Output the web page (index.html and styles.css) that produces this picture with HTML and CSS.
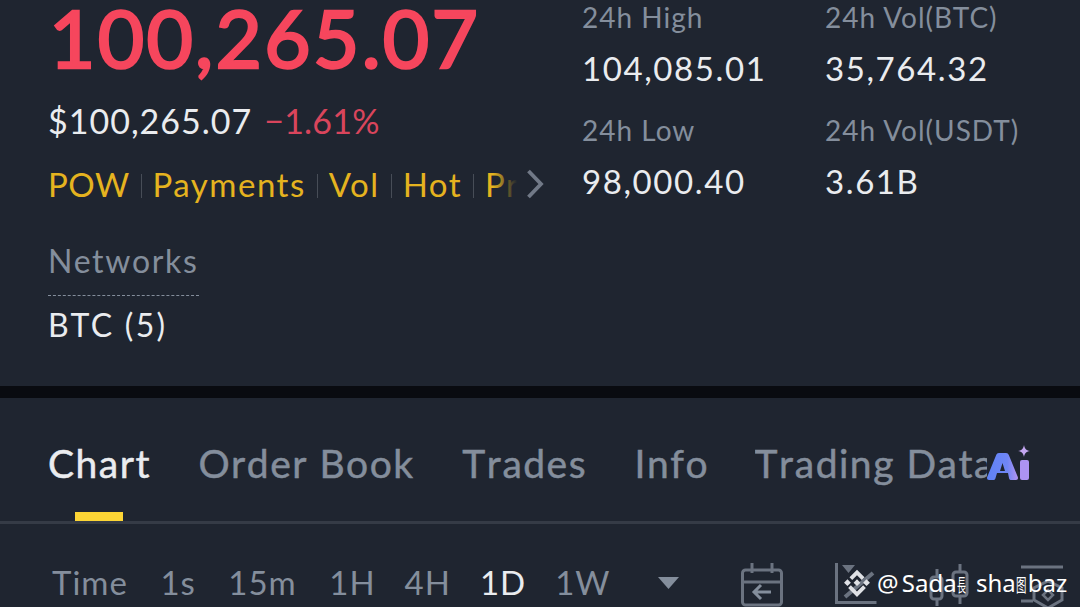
FILE: index.html
```html
<!DOCTYPE html>
<html lang="en">
<head>
  <meta charset="UTF-8">
  <title>BTC/USDT</title>
  <link rel="stylesheet" href="styles.css">
</head>
<body>
  <section class="summary">
    <div class="price-col">
      <div class="last-price">100,265.07</div>
      <div class="sub-price"><span class="usd">$100,265.07</span><span class="change">−1.61%</span></div>
      <div class="tags-row">
        <div class="tags">
          <span class="tag-short">POW</span><i></i><span>Payments</span><i></i><span>Vol</span><i></i><span>Hot</span><i></i><span>Pr</span>
          <div class="tags-fade"></div>
        </div>
        <svg class="tags-arrow" width="18" height="30" viewBox="0 0 18 30"><path d="M2.500 2l12.500 13L2.500 28" fill="none" stroke="#717987" stroke-width="3.800"/></svg>
      </div>
      <div class="networks">
        <span class="networks-label">Networks</span>
        <span class="networks-value">BTC (5)</span>
      </div>
    </div>
    <div class="stats">
      <div class="stat"><span class="stat-label">24h High</span><span class="stat-value">104,085.01</span></div>
      <div class="stat"><span class="stat-label">24h Vol(BTC)</span><span class="stat-value">35,764.32</span></div>
      <div class="stat"><span class="stat-label">24h Low</span><span class="stat-value">98,000.40</span></div>
      <div class="stat"><span class="stat-label">24h Vol(USDT)</span><span class="stat-value">3.61B</span></div>
    </div>
  </section>

  <div class="divider"></div>

  <nav class="tabs">
    <a class="tab active">Chart</a>
    <a class="tab">Order Book</a>
    <a class="tab">Trades</a>
    <a class="tab">Info</a>
    <a class="tab tab-clip">Trading Data</a>
    <svg class="ai-badge" width="46" height="40" viewBox="0 0 46 40">
      <defs>
        <linearGradient id="aiFill" x1="0" x2="1" y1="0" y2="0">
          <stop offset="0" stop-color="#5f82f5"/>
          <stop offset="0.65" stop-color="#6f86f6"/>
          <stop offset="1" stop-color="#b394f2"/>
        </linearGradient>
      </defs>
      <path fill="url(#aiFill)" fill-rule="evenodd" d="M13 11h7c1.500 0 2.300.7 2.800 2l9 22c.6 1.600-.2 3-1.800 3h-4.500c-1.200 0-2-.6-2.400-1.600L22 31H11l-1.600 5.400C9 37.400 8.200 38 7 38H3c-1.600 0-2.400-1.400-1.800-3l9-22c.5-1.300 1.300-2 2.800-2zm3.500 10L14 29h5z"/>
      <rect x="34" y="18" width="9" height="20" rx="2" fill="#ac93f3"/>
      <path d="M38 3c.7 3.600 1.800 5.300 6 6-4.200.7-5.300 2.400-6 6-.7-3.600-1.800-5.300-6-6 4.200-.7 5.300-2.400 6-6z" fill="#c3a6f0"/>
    </svg>
  </nav>

  <div class="intervals">
    <span class="int">Time</span>
    <span class="int">1s</span>
    <span class="int">15m</span>
    <span class="int tight">1H</span>
    <span class="int tight">4H</span>
    <span class="int tight active">1D</span>
    <span class="int">1W</span>
    <svg class="caret" width="21" height="12" viewBox="0 0 21 12"><path d="M0 0h21L10.500 12z" fill="#848e9c"/></svg>
    <div class="tools">
      <svg width="44" height="46" viewBox="0 0 44 46" fill="none" stroke="#6b7380" stroke-width="3">
        <rect x="1.500" y="9" width="39" height="35" rx="3"/>
        <path d="M1.500 21h39M11 2v10M31 2v10"/>
        <path d="M30 31H13M20 24l-7 7 7 7" stroke="#848e9c"/>
      </svg>
      <svg width="44" height="46" viewBox="0 0 44 46" fill="none" stroke="#6b7380" stroke-width="3">
        <path d="M1.500 2v39.500h40"/>
        <path d="M10 36l28-24" stroke-width="4"/>
        <path d="M7 4h13l-6.500 8z" fill="#6b7380" stroke="none"/>
      </svg>
      <svg width="44" height="46" viewBox="0 0 44 46" fill="none" stroke="#6b7380" stroke-width="3">
        <rect x="2" y="16" width="11" height="22" rx="3"/>
        <path d="M8 8v8M8 38v7"/>
        <rect x="24" y="11" width="14" height="24" rx="3"/>
        <path d="M31 3v8M31 35v8"/>
      </svg>
      <svg class="tool-last" width="44" height="46" viewBox="0 0 44 46" fill="none" stroke="#6b7380" stroke-width="3">
        <path d="M1 6h42M1 40h12"/>
        <path d="M28 20l14 7v12l-14 8-14-8V27z"/>
        <path d="M28 29l5 5-5 5-5-5z" stroke-width="2.500"/>
      </svg>
    </div>
  </div>

  <div class="watermark">
    <svg class="wm-logo" width="30" height="30" viewBox="0 0 44 44" fill="#dfe1e5">
      <path d="M22 1l11 11-4 4-7-7-7 7-4-4z"/>
      <path d="M3 20l5-5 5 5-5 5zM31 20l5-5 5 5-5 5z"/>
      <path d="M22 15l5 5-5 5-5-5z"/>
      <path d="M9 28l4-4 9 9 9-9 4 4-13 13z"/>
    </svg>
    <span class="wm-text">@ Sada<span class="wm-cjk wm-narrow">長</span> sha<span class="wm-cjk wm-box">图</span>baz</span>
  </div>
</body>
</html>
```

FILE: styles.css
```css
* {
  box-sizing: border-box;
}
html, body {
  margin: 0;
  height: 100%;
}
body {
  position: relative;
  width: 1080px;
  height: 607px;
  overflow: hidden;
  background: #1f2530;
  font-family: Lato, "Noto Sans", sans-serif;
  color: #eaecef;
}

/* top panel */
.summary {
  height: 386px;
  padding-left: 48px;
  display: flex;
}
.price-col {
  width: 535px;
  flex: none;
}
.last-price {
  margin-top: -13px;
  margin-left: 1px;
  font-size: 80px;
  line-height: 100px;
  letter-spacing: 2.300px;
  -webkit-text-stroke: 2.600px currentColor;
  color: #f6465d;
}
.sub-price {
  margin-top: 13px;
  font-size: 34px;
  line-height: 42px;
  letter-spacing: 1px;
  display: flex;
  gap: 12px;
}
.change {
  letter-spacing: 0.200px;
  color: #d9455c;
}
.tags-row {
  margin-top: 20px;
  height: 44px;
  display: flex;
  align-items: center;
}
.tags {
  position: relative;
  width: 469px;
  overflow: hidden;
  display: flex;
  align-items: center;
  gap: 11px;
  font-size: 33px;
  letter-spacing: 1.500px;
  color: #e5b31f;
  white-space: nowrap;
}
.tags .tag-short {
  letter-spacing: 0.500px;
}
.tags i {
  width: 1px;
  height: 24px;
  margin-top: 4px;
  background: #474d57;
  flex: none;
}
.tags-fade {
  position: absolute;
  top: 0;
  right: 0;
  width: 24px;
  height: 100%;
  background: linear-gradient(90deg, rgba(31,37,48,0), #1f2530);
}
.tags-arrow {
  margin-left: 9px;
}
.networks {
  margin-top: 33px;
  display: inline-flex;
  flex-direction: column;
}
.networks-label {
  font-size: 32px;
  line-height: 44px;
  letter-spacing: 1.700px;
  color: #848e9c;
  border-bottom: 1px dashed #848e9c;
  padding-bottom: 12px;
}
.networks-value {
  margin-top: 7px;
  font-size: 32px;
  line-height: 44px;
  letter-spacing: 2.300px;
}

.stats {
  display: grid;
  grid-template-columns: 243px 1fr;
  grid-auto-rows: 113px;
  align-content: start;
  margin-top: -5px;
  margin-left: -1px;
}
.stat {
  display: flex;
  flex-direction: column;
}
.stat-label {
  font-size: 28px;
  line-height: 44px;
  letter-spacing: 1px;
  color: #848e9c;
}
.stat-value {
  font-size: 33px;
  line-height: 46px;
  margin-top: 6px;
  letter-spacing: 1.600px;
}

/* black strip between panels */
.divider {
  height: 12px;
  background: #090b10;
}

.tabs {
  position: relative;
  height: 126px;
  padding: 39px 0 0 48px;
  display: flex;
  gap: 47.500px;
  border-bottom: 3px solid #353b46;
}
.tab {
  position: relative;
  height: 84px;
  font-size: 39px;
  line-height: 52px;
  letter-spacing: 1.500px;
  font-kerning: none;
  -webkit-text-stroke: 0.5px currentColor;
  color: #848e9c;
  white-space: nowrap;
}
.tab.active {
  color: #eaecef;
}
.tab.active::after {
  content: "";
  position: absolute;
  left: 27px;
  bottom: 0;
  width: 48px;
  height: 9px;
  background: #fcd535;
}
.tab-clip {
  margin-left: -2px;
  width: 232px;
  overflow: hidden;
}
.ai-badge {
  position: absolute;
  left: 986px;
  top: 44px;
}

.intervals {
  padding: 35px 0 0 52px;
  display: flex;
  align-items: flex-start;
  font-size: 33px;
  line-height: 46px;
  letter-spacing: 1px;
  color: #848e9c;
}
.int {
  margin-right: 32.500px;
}
.int.tight {
  margin-right: 29px;
}
.int.active {
  color: #eaecef;
}
.caret {
  margin: 18px 0 0 15px;
}
.tools {
  margin-left: 62px;
  margin-top: 2px;
  display: flex;
  gap: 50px;
}
.tool-last {
  margin-left: -3px;
}

.watermark {
  position: absolute;
  left: 842px;
  top: 563px;
  display: flex;
  align-items: center;
  gap: 5px;
  color: #fff;
}
.wm-text {
  font-family: "Noto Sans", sans-serif;
  font-size: 24px;
  line-height: 40px;
  word-spacing: -3px;
  white-space: nowrap;
}
.wm-cjk {
  display: inline-block;
  font-family: "Noto Sans CJK SC", sans-serif;
  font-size: 18px;
  transform-origin: left center;
}
.wm-narrow {
  width: 10px;
  margin-right: 6px;
  transform: scaleX(0.5);
}
.wm-box {
  width: 12px;
  transform: scaleX(0.58);
}
```
